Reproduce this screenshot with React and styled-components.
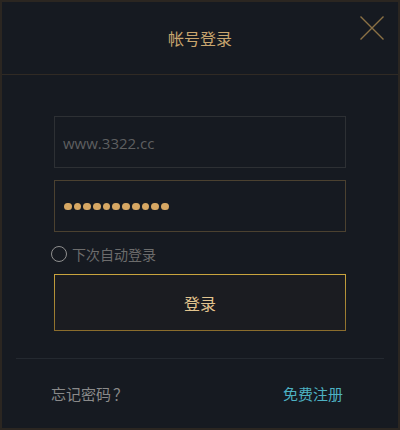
import React from "react";
import styled, { createGlobalStyle } from "styled-components";

const Global = createGlobalStyle`
  html, body { margin: 0; padding: 0; background: #161a21; }
  * { box-sizing: border-box; }
`;

const Dialog = styled.div`
  width: 400px;
  height: 430px;
  border: 2px solid #2b2621;
  background: #161a21;
  display: flex;
  flex-direction: column;
  font-family: "Noto Sans CJK SC", "Open Sans", sans-serif;
`;

const Header = styled.div`
  height: 74px;
  border-bottom: 1px solid #302a24;
  display: grid;
  grid-template-columns: 1fr auto 1fr;
  align-items: start;
  padding: 14px 14px 0 14px;
`;

const Title = styled.div`
  grid-column: 2;
  margin-top: 10px;
  font-size: 16px;
  line-height: 24px;
  color: #c8a56e;
`;

const Close = styled.button`
  grid-column: 3;
  justify-self: end;
  width: 24px;
  height: 24px;
  padding: 0;
  border: 0;
  background: transparent;
  cursor: pointer;
  display: block;
`;

const Form = styled.div`
  display: flex;
  flex-direction: column;
  padding: 41px 0 0 52px;
`;

const Field = styled.div`
  width: 292px;
  height: 52px;
  border: 1px solid ${(p) => (p.$active ? "#4b4130" : "#2d3034")};
  display: flex;
  align-items: center;
  padding-left: 8px;
  margin-bottom: 12px;
`;

const Placeholder = styled.span`
  font-family: "Open Sans", "Noto Sans CJK SC", sans-serif;
  font-size: 15px;
  color: #5e5f60;
  padding-top: 2px;
`;

const Dots = styled.div`
  display: flex;
  gap: 2px;
  padding-left: 1px;
  padding-top: 1px;
`;

const Dot = styled.span`
  width: 7.7px;
  height: 7.7px;
  border-radius: 50%;
  background: #d6a763;
`;

const Remember = styled.label`
  display: flex;
  align-items: center;
  gap: 5px;
  margin-left: -3px;
  margin-top: 1px;
  height: 18px;
`;

const Radio = styled.span`
  width: 16px;
  height: 16px;
  border-radius: 50%;
  border: 1.5px solid #8f8f8f;
`;

const RememberText = styled.span`
  font-size: 14px;
  color: #6c6c6c;
`;

const LoginButton = styled.button`
  margin-top: 11px;
  width: 292px;
  height: 57px;
  background: #1b1c21;
  border: 1px solid;
  border-image: linear-gradient(180deg, #c9a43e, #8a6c2c) 1;
  color: #e2c48e;
  font-family: "Noto Sans CJK SC", sans-serif;
  font-size: 16px;
  cursor: pointer;
  padding: 0;
`;

const Divider = styled.div`
  margin: 27px 14px 0 14px;
  height: 1px;
  background: #242930;
`;

const Footer = styled.div`
  display: flex;
  justify-content: space-between;
  align-items: center;
  padding: 0 55px 0 49px;
  height: 70px;
`;

const FooterLink = styled.a`
  font-size: 15px;
  color: ${(p) => p.$color};
  text-decoration: none;
  cursor: pointer;
`;

const Mark = styled.span`
  display: inline-block;
  width: 1em;
  text-align: center;
  margin-left: 2px;
`;

export default function App() {
  return (
    <>
      <Global />
      <Dialog>
        <Header>
          <Title>帐号登录</Title>
          <Close aria-label="close">
            <svg width="24" height="24" viewBox="0 0 24 24">
              <path d="M0.5 0.5 L23.5 23.5 M23.5 0.5 L0.5 23.5" stroke="#8b7145" strokeWidth="1.4" fill="none" />
            </svg>
          </Close>
        </Header>
        <Form>
          <Field>
            <Placeholder>www.3322.cc</Placeholder>
          </Field>
          <Field $active>
            <Dots>
              {Array.from({ length: 11 }).map((_, i) => (
                <Dot key={i} />
              ))}
            </Dots>
          </Field>
          <Remember>
            <Radio />
            <RememberText>下次自动登录</RememberText>
          </Remember>
          <LoginButton>登录</LoginButton>
        </Form>
        <Divider />
        <Footer>
          <FooterLink $color="#8a8a8a">
            忘记密码<Mark>？</Mark>
          </FooterLink>
          <FooterLink $color="#4db1c2">免费注册</FooterLink>
        </Footer>
      </Dialog>
    </>
  );
}
